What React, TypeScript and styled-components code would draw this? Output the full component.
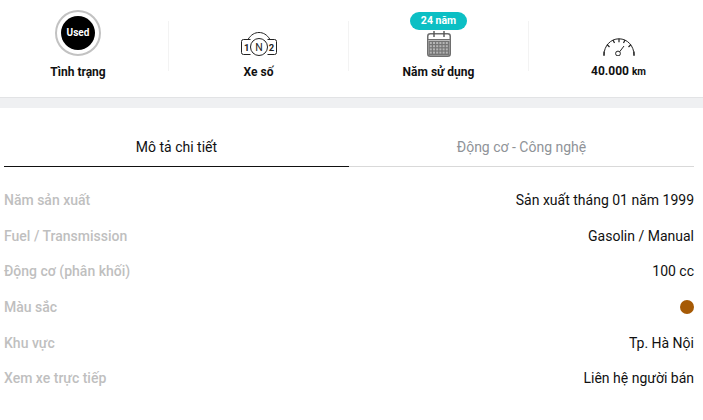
import styled, { createGlobalStyle } from "styled-components";

const GlobalStyle = createGlobalStyle`
  html, body {
    margin: 0;
    padding: 0;
    background: #fff;
    overflow: hidden;
  }
  body {
    font-family: Roboto, "Liberation Sans", sans-serif;
  }
`;

const specs = [
  { label: "Năm sản xuất", value: "Sản xuất tháng 01 năm 1999" },
  { label: "Fuel / Transmission", value: "Gasolin / Manual" },
  { label: "Động cơ (phân khối)", value: "100 cc" },
  { label: "Màu sắc", color: "#a65a05" },
  { label: "Khu vực", value: "Tp. Hà Nội" },
  { label: "Xem xe trực tiếp", value: "Liên hệ người bán" },
];

function GearIcon() {
  return (
    <svg width="36" height="25" viewBox="0 0 36 25" fill="none" stroke="#222" strokeWidth="1">
      <path d="M7 7.500C10 2.500 14 0.500 18 0.500s8 2 11 7" />
      <path d="M9.500 7.500H2.500a2 2 0 0 0-2 2v11a2 2 0 0 0 2 2h7M26.500 7.500h7a2 2 0 0 1 2 2v11a2 2 0 0 1-2 2h-7" />
      <circle cx="18" cy="15" r="8.500" />
      <text x="18" y="19" textAnchor="middle" fontSize="10.500" fontFamily="Roboto, sans-serif" fill="#222" stroke="none">N</text>
      <text x="5.800" y="19" textAnchor="middle" fontSize="9.500" fontWeight="700" fontFamily="Roboto, sans-serif" fill="#222" stroke="none">1</text>
      <text x="30.500" y="19" textAnchor="middle" fontSize="9.500" fontWeight="700" fontFamily="Roboto, sans-serif" fill="#222" stroke="none">2</text>
    </svg>
  );
}

function CalendarIcon() {
  const cells = [];
  for (let r = 0; r < 4; r++) {
    for (let c = 0; c < 6; c++) {
      cells.push(<rect key={`${r}-${c}`} x={2.8 + c * 3.2} y={11 + r * 3.2} width="2" height="2" fill="#b5b5b5" />);
    }
  }
  return (
    <svg width="24" height="26" viewBox="0 0 24 26" fill="none">
      <rect x="0.750" y="2.750" width="22.500" height="22.500" rx="2.500" fill="#fff" stroke="#6e6e6e" strokeWidth="1.500" />
      <rect x="1.500" y="9.500" width="21" height="15" rx="1" fill="#757575" />
      <path d="M1 8.500h22" stroke="#6e6e6e" />
      <path d="M7 0v6M17 0v6" stroke="#555" strokeWidth="1.400" />
      {cells}
    </svg>
  );
}

function GaugeIcon() {
  return (
    <svg width="32" height="18" viewBox="0 0 32 18" fill="none" stroke="#222" strokeWidth="1">
      <path d="M1 17C1 8 7.500 0.800 16 0.800S31 8 31 17" />
      <path d="M1 13.500V18M31 13.500V18M4 6.500l2.500 2.500M28 6.500L25.500 9M10 2l1.500 3M22 2L20.500 5M16 0.800v3.500" strokeWidth="1.200" />
      <circle cx="15" cy="15.500" r="2.400" />
      <path d="M16.700 13.700L21 8" />
    </svg>
  );
}

export default function App() {
  return (
    <Page>
      <GlobalStyle />
      <Stats>
        <Stat>
          <UsedRing>
            <UsedDot>Used</UsedDot>
          </UsedRing>
          <StatLabel>Tình trạng</StatLabel>
        </Stat>
        <Stat $divided>
          <IconSlot>
            <GearIcon />
          </IconSlot>
          <StatLabel>Xe số</StatLabel>
        </Stat>
        <Stat $divided>
          <YearBadge>24 năm</YearBadge>
          <IconSlot>
            <CalendarIcon />
          </IconSlot>
          <StatLabel>Năm sử dụng</StatLabel>
        </Stat>
        <Stat $divided>
          <IconSlot>
            <GaugeIcon />
          </IconSlot>
          <StatLabel>
            40.000 <Unit>km</Unit>
          </StatLabel>
        </Stat>
      </Stats>
      <Band />
      <Content>
        <Tabs>
          <Tab $active>Mô tả chi tiết</Tab>
          <Tab>Động cơ - Công nghệ</Tab>
        </Tabs>
        <SpecList>
          {specs.map((spec) => (
            <SpecRow key={spec.label}>
              <SpecLabel>{spec.label}</SpecLabel>
              {spec.color ? <Swatch $color={spec.color} /> : <SpecValue>{spec.value}</SpecValue>}
            </SpecRow>
          ))}
        </SpecList>
      </Content>
    </Page>
  );
}

const Page = styled.div`
  width: 703px;
  height: 420px;
  overflow: hidden;
  background: #fff;
  color: #111;
`;

const Stats = styled.div`
  display: grid;
  grid-template-columns: repeat(4, 180px);
  margin-left: -12px;
  height: 97px;
  box-sizing: border-box;
  padding-top: 21px;
`;

const Stat = styled.div<{ $divided?: boolean }>`
  position: relative;
  height: 50px;
  display: flex;
  flex-direction: column;
  align-items: center;
  justify-content: flex-end;
  border-left: ${({ $divided }) => ($divided ? "1px solid #f3f3f3" : "none")};
  box-sizing: border-box;
`;

const UsedRing = styled.div`
  position: absolute;
  top: -11px;
  left: 67px;
  width: 46px;
  height: 46px;
  box-sizing: border-box;
  border: 2px solid #c2c2c2;
  border-radius: 50%;
  display: flex;
  align-items: center;
  justify-content: center;
`;

const UsedDot = styled.div`
  width: 34px;
  height: 34px;
  border-radius: 50%;
  background: #000;
  color: #fff;
  font-size: 10px;
  font-weight: 700;
  line-height: 34px;
  text-align: center;
`;

const IconSlot = styled.div`
  height: 27px;
  display: flex;
  align-items: flex-end;
  justify-content: center;
  margin-bottom: -2px;
`;

const StatLabel = styled.div`
  position: relative;
  top: 9px;
  font-size: 12px;
  font-weight: 700;
  line-height: 16px;
  color: #111;
  white-space: nowrap;
`;

const Unit = styled.span`
  font-size: 10px;
`;

const YearBadge = styled.div`
  position: absolute;
  top: -9px;
  left: 61px;
  width: 57px;
  height: 18px;
  border-radius: 9px;
  background: #0cbfc4;
  color: #fff;
  font-size: 10.500px;
  font-weight: 700;
  line-height: 18px;
  text-align: center;
`;

const Band = styled.div`
  height: 10px;
  background: #eff0f2;
  border-top: 1px solid #e2e3e5;
`;

const Content = styled.div`
  padding: 0 9px 0 4px;
`;

const Tabs = styled.div`
  display: grid;
  grid-template-columns: 345px 345px;
  height: 59px;
`;

const Tab = styled.div<{ $active?: boolean }>`
  box-sizing: border-box;
  height: 59px;
  padding-top: 30px;
  font-size: 14px;
  line-height: 18px;
  text-align: center;
  color: ${({ $active }) => ($active ? "#111" : "#8f9398")};
  border-bottom: 1px solid ${({ $active }) => ($active ? "#111" : "#d9d9d9")};
`;

const SpecList = styled.div`
  padding-top: 15.400px;
`;

const SpecRow = styled.div`
  height: 35.600px;
  display: flex;
  align-items: center;
  justify-content: space-between;
`;

const SpecLabel = styled.span`
  font-size: 14px;
  font-weight: 500;
  color: #bfbfbf;
`;

const SpecValue = styled.span`
  font-size: 14px;
  color: #111;
`;

const Swatch = styled.span<{ $color: string }>`
  width: 14px;
  height: 14px;
  border-radius: 50%;
  background: ${({ $color }) => $color};
`;
